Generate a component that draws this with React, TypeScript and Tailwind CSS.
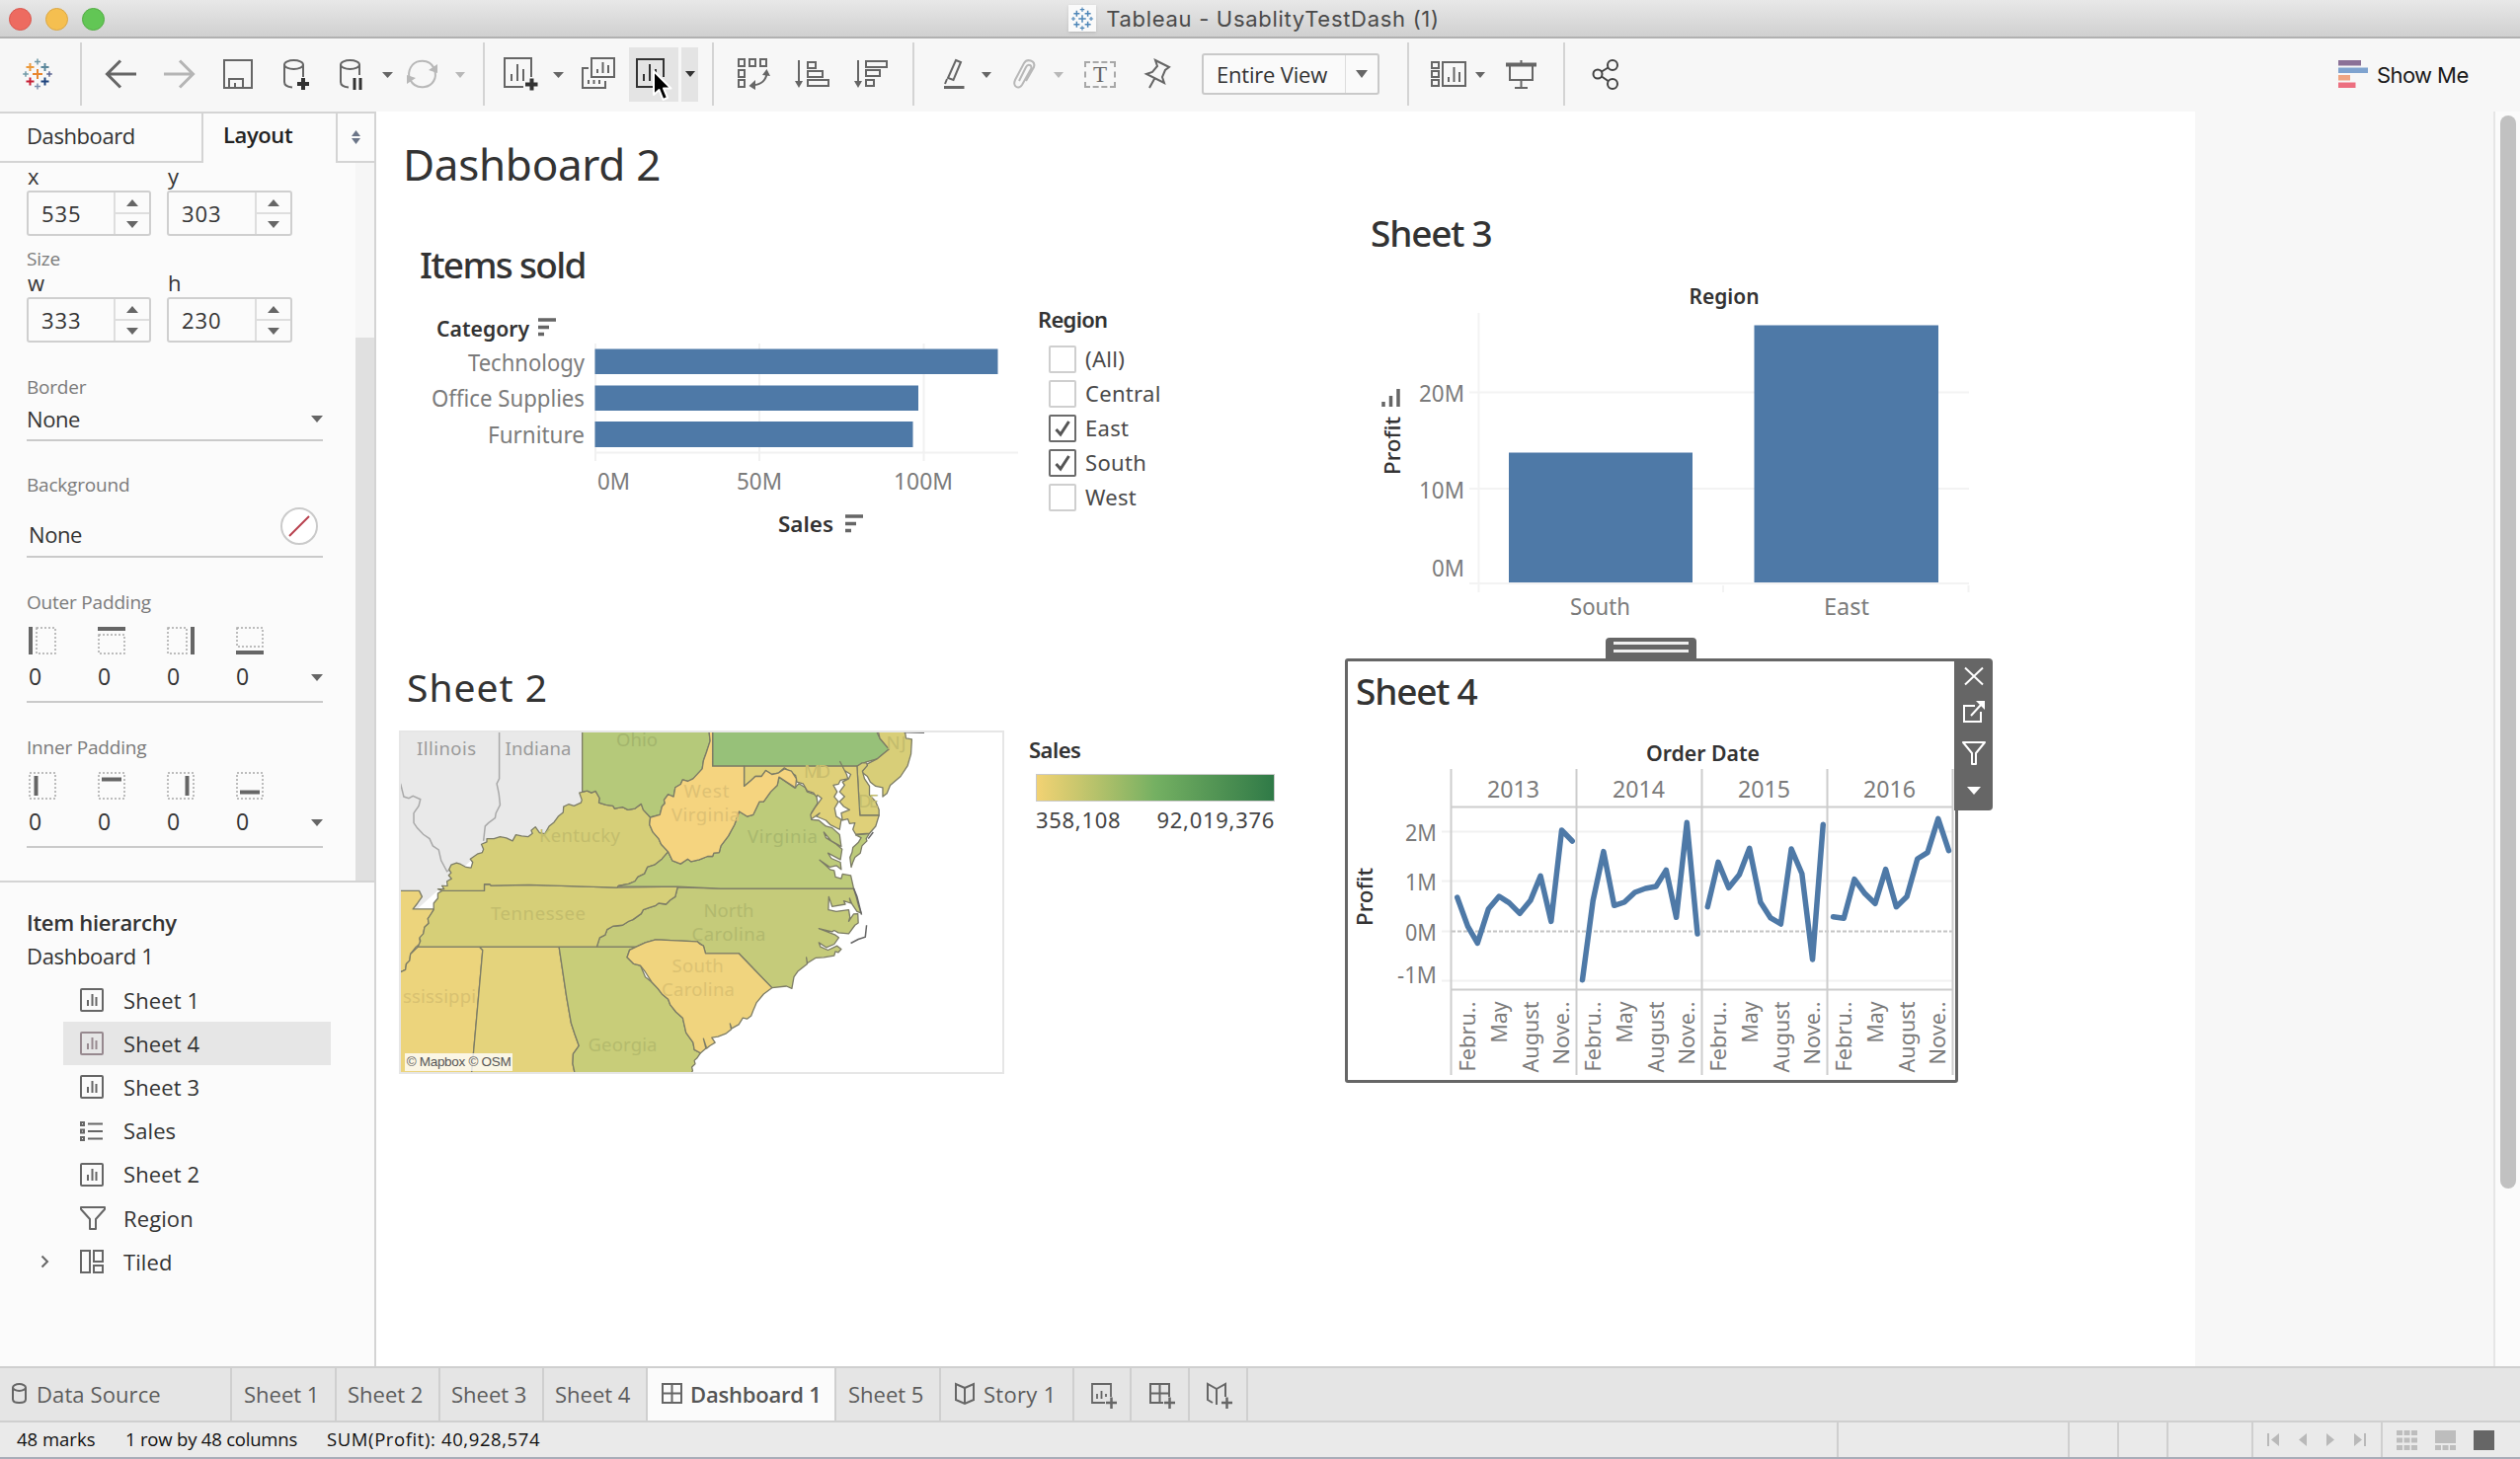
import React from "react";

const INK = "#666666";
const BLUE = "#4e79a7";

/* ---------- shared bits ---------- */

function Caret({ w = 12, h = 7, color = INK, up = false }: { w?: number; h?: number; color?: string; up?: boolean }) {
  return (
    <svg width={w} height={h} viewBox="0 0 12 7" preserveAspectRatio="none" className="block shrink-0">
      <path d={up ? "M0 7H12L6 0Z" : "M0 0H12L6 7Z"} fill={color} />
    </svg>
  );
}

function Icon({ w, h = 34, x = 0, children, color = INK, sw = 2 }: { w: number; h?: number; x?: number; children: React.ReactNode; color?: string; sw?: number }) {
  return (
    <svg width={w} height={h} viewBox={`${x} 0 ${w} ${h}`} fill="none" stroke={color} strokeWidth={sw} className="block shrink-0 overflow-visible">
      {children}
    </svg>
  );
}

const plus = (cx: number, cy: number, r: number, color: string, sw: number) => (
  <path key={`${cx}-${cy}`} d={`M${cx - r} ${cy}H${cx + r}M${cx} ${cy - r}V${cy + r}`} stroke={color} strokeWidth={sw} />
);

function Logo({ size, mono }: { size: number; mono?: boolean }) {
  const c = (v: string) => (mono ? "#4e86b8" : v);
  return (
    <svg width={size} height={size} viewBox="0 0 32 32" className="block shrink-0">
      {plus(16, 16, 5, c("#e8862d"), 2)}
      {plus(8.5, 9, 4, c("#eb9a3c"), 2)}
      {plus(23.5, 9, 4, c("#5b879b"), 2)}
      {plus(8.5, 23.5, 4, c("#c72035"), 2)}
      {plus(23.5, 23.5, 4, c("#1f447e"), 2)}
      {plus(16, 3.5, 3, c("#7199a6"), 1.5)}
      {plus(16, 28.5, 3, c("#7b8fae"), 1.5)}
      {plus(4, 16, 2.8, c("#7199a6"), 1.5)}
      {plus(28, 16, 2.8, c("#5c6692"), 1.5)}
    </svg>
  );
}

/* ---------- title bar and toolbar ---------- */

function TitleBar() {
  return (
    <div className="relative flex h-[39px] shrink-0 items-center justify-center border-b-2 border-[#b1b1b1] bg-linear-to-b from-[#e8e8e8] to-[#d0d0d0]">
      <div className="absolute left-[9px] top-[8px] flex gap-[14px]">
        <span className="size-[23px] rounded-full border border-[#d9574e] bg-[#ed6b60]" />
        <span className="size-[23px] rounded-full border border-[#dba744] bg-[#f5bf50]" />
        <span className="size-[23px] rounded-full border border-[#52ad43] bg-[#62c655]" />
      </div>
      <div className="mr-[12px] flex items-center gap-[10px]">
        <div className="flex h-[27px] w-[28px] items-center justify-center bg-[#fafafa] shadow-sm">
          <Logo size={24} mono />
        </div>
        <span className="font-[Inter] text-[22px] leading-none tracking-[0.7px] text-[#4a4a4a]">Tableau - UsablityTestDash (1)</span>
      </div>
    </div>
  );
}

const Sep = ({ className }: { className: string }) => <div className={`h-[64px] w-[2px] shrink-0 bg-[#d4d4d4] ${className}`} />;

function Toolbar() {
  return (
    <div className="flex h-[74px] shrink-0 items-center bg-[#f7f7f7] pb-[2px]">
      <div className="ml-[22px]"><Logo size={32} /></div>
      <Sep className="ml-[27px]" />
      <div className="ml-[24px]">
        <Icon w={31} h={30} sw={3}><path d="M1.5 15H31M15 1.5L1.5 15L15 28.5" /></Icon>
      </div>
      <div className="ml-[28px]">
        <Icon w={31} h={30} sw={3} color="#b5b5b5"><path d="M29.5 15H0M16 1.5L29.5 15L16 28.5" /></Icon>
      </div>
      <div className="ml-[29px]">
        <Icon w={30} h={30}><path d="M1 1H29V29H1ZM6 29V20H20V29M12 29V24" /></Icon>
      </div>
      <div className="ml-[31px]">
        <Icon w={27} h={30}>
          <ellipse cx="10.5" cy="5.5" rx="9.5" ry="4.5" />
          <path d="M1 5.5V23C1 26 4 28 9 28.5M20 5.5V18" />
          <path d="M14 25H26M20 19V31" stroke="#333" strokeWidth="4" />
        </Icon>
      </div>
      <div className="ml-[30px]">
        <Icon w={23} h={30}>
          <ellipse cx="10.5" cy="5.5" rx="9.5" ry="4.5" />
          <path d="M1 5.5V23C1 26 4 28 9 28.5M20 5.5V16" />
          <path d="M15 19V31M21 19V31" stroke="#333" strokeWidth="3" />
        </Icon>
      </div>
      <div className="ml-[20px] mt-[2px]"><Caret w={11} h={6} /></div>
      <div className="ml-[14px]">
        <Icon w={31} h={30} color="#b8b8b8">
          <path d="M3 20C0 12 5 3 13 2C20 1 25 4 27.500 9M28 11C31 19 26 27 18 28C11 29 6 26 3.500 21" />
          <path d="M31 5V14L22 11ZM0 25V16L9 19Z" fill="#b8b8b8" stroke="none" />
        </Icon>
      </div>
      <div className="ml-[18px] mt-[2px]"><Caret w={10} h={6} color="#b8b8b8" /></div>
      <Sep className="ml-[18px]" />
      <div className="ml-[19px]">
        <Icon w={34} h={34}>
          <path d="M20 30H1V1H28V20" />
          <path d="M8 24V17M14 24V7M20 24V12" />
          <path d="M22 27.5H34.5M28.5 21.5V33.5" stroke="#333" strokeWidth="4" />
        </Icon>
      </div>
      <div className="ml-[16px] mt-[2px]"><Caret w={11} h={6} /></div>
      <div className="ml-[18px]">
        <Icon w={34} h={34}>
          <path d="M10 1H33V20H10ZM7 11H1V31H24V24" />
          <path d="M16 16V12M21.500 16V5M27 16V8M7 27V23M12.500 27V23M18 27V23" />
        </Icon>
      </div>
      <div className="ml-[14px] flex h-[55px] w-[50px] shrink-0 items-center bg-[#e4e4e4] pl-[7px]">
        <Icon w={34} h={34} color="#333">
          <path d="M20 30H1V2H28V20" />
          <path d="M8 24V17M14 24V7M20 24V12" />
        </Icon>
      </div>
      <div className="ml-[3px] flex h-[55px] w-[17px] shrink-0 items-center justify-center bg-[#e4e4e4]"><Caret w={10} h={6} color="#333" /></div>
      <Sep className="ml-[14px]" />
      <div className="ml-[24px]">
        <Icon w={33} h={32}>
          <path d="M1 1H7V8H1ZM12 1H18V8H12ZM23 1H29V8H23ZM1 12H7V19H1ZM1 22H7V29H1Z" />
          <path d="M16 27C24 27 29 22 29.500 15" />
          <path d="M33 18L29.500 11L25 17ZM18 22V32L11.500 28Z" fill={INK} stroke="none" />
        </Icon>
      </div>
      <div className="ml-[25px]">
        <Icon w={34} h={28}>
          <path d="M4 0V23M13 2H21V8H13ZM13 11H28V17H13ZM13 20H34V26H13Z" />
          <path d="M0 21H8L4 28Z" fill={INK} stroke="none" />
        </Icon>
      </div>
      <div className="ml-[26px]">
        <Icon w={34} h={28}>
          <path d="M4 0V23M12 1H33V7H12ZM12 10H26V16H12ZM12 20H20V26H12Z" />
          <path d="M0 21H8L4 28Z" fill={INK} stroke="none" />
        </Icon>
      </div>
      <Sep className="ml-[25px]" />
      <div className="ml-[30px]">
        <Icon w={22} h={32}>
          <path d="M12 2L17 4L9.500 22L4 20ZM3 21L1 26" />
          <path d="M0 29.500H20.500" strokeWidth="3" />
        </Icon>
      </div>
      <div className="ml-[16px] mt-[2px]"><Caret w={10} h={6} /></div>
      <div className="ml-[22px]">
        <Icon w={23} h={30} color="#b8b8b8">
          <path d="M6 22L13 8C15 4 20 6 18 10L9 26C6 31 -1 28 2 21L11 4C14 -1 23 1 21 8L13 22" />
        </Icon>
      </div>
      <div className="ml-[18px] mt-[2px]"><Caret w={10} h={6} color="#b8b8b8" /></div>
      <div className="ml-[21px]">
        <div className="flex h-[27px] w-[32px] shrink-0 items-center justify-center border-2 border-dashed border-[#a8a8a8] font-['Liberation_Serif'] text-[23px] leading-none text-[#666]">T</div>
      </div>
      <div className="ml-[30px]">
        <Icon w={25} h={30}>
          <path d="M10 1L24 8L20 11L17 18L19 24L1 15L7 13L12 7ZM9 20L4 29" />
        </Icon>
      </div>
      <div className="ml-[32px] flex h-[42px] w-[180px] shrink-0 rounded-[3px] border-2 border-[#c9c9c9] bg-[#fafafa]">
        <div className="flex flex-1 items-center pl-[13px] pb-px text-[22px] leading-none tracking-[-0.2px] text-[#333]">Entire View</div>
        <div className="flex w-[33px] items-center justify-center border-l border-[#dcdcdc]"><Caret w={12} h={8} /></div>
      </div>
      <Sep className="ml-[28px]" />
      <div className="ml-[22px]">
        <Icon w={36} h={28}>
          <path d="M1 2H8V8H1ZM1 11H8V17H1ZM1 20H8V26H1ZM12 2H35V26H12Z" />
          <path d="M18 22V17M23.500 22V7M29 22V12" />
        </Icon>
      </div>
      <div className="ml-[9px] mt-[2px]"><Caret w={10} h={6} /></div>
      <div className="ml-[21px]">
        <Icon w={31} h={29}>
          <path d="M15.500 0V4M4 5V20H27V5M15.500 20V27M9 28H22" />
          <path d="M0 4.500H31" strokeWidth="4" />
        </Icon>
      </div>
      <Sep className="ml-[27px]" />
      <div className="ml-[27px]">
        <Icon w={28} h={30} color="#444">
          <circle cx="6" cy="15" r="4.500" /><circle cx="21" cy="6" r="5" /><circle cx="21" cy="25" r="5" />
          <path d="M10 12.500L16.500 8.500M10 17.500L16.500 22" />
        </Icon>
      </div>
      <div className="ml-auto mr-[54px] flex items-center gap-[9px]">
        <svg width="30" height="28" className="block shrink-0">
          <path d="M0 0H23V5.500H0Z" fill="#8b7197" /><path d="M0 7.500H30V13H0Z" fill="#7fa3cf" />
          <path d="M0 15H12V20.500H0Z" fill="#f0a582" /><path d="M0 22.500H17.500V28H0Z" fill="#ec6f80" />
        </svg>
        <span className="w-[91px] pt-px font-[Inter] text-[22px] leading-none tracking-[-0.6px] whitespace-nowrap text-[#1a1a1a]">Show Me</span>
      </div>
    </div>
  );
}

/* ---------- side panel ---------- */

function NumberField({ value, wide }: { value: string; wide?: boolean }) {
  return (
    <div className={`flex h-[46px] rounded-[3px] border-2 border-[#cfcfcf] ${wide ? "w-[127px]" : "w-[126px]"}`}>
      <div className="flex flex-1 items-center pl-[13px] text-[22px] tracking-[0.9px]">{value}</div>
      <div className="flex w-[36px] flex-col border-l-2 border-[#dedede]">
        <div className="flex flex-1 items-center justify-center border-b-2 border-[#dedede]"><Caret up /></div>
        <div className="flex flex-1 items-center justify-center"><Caret /></div>
      </div>
    </div>
  );
}

function FieldPair({ labels, values }: { labels: [string, string]; values: [string, string] }) {
  return (
    <div className="flex gap-[16px]">
      {labels.map((label, i) => (
        <div key={label} className="flex flex-col">
          <div className="h-[28px] pl-px text-[22px] leading-[27px]">{label}</div>
          <NumberField value={values[i]} wide={i === 1} />
        </div>
      ))}
    </div>
  );
}

const GroupLabel = ({ children }: { children: React.ReactNode }) => (
  <div className="h-6 text-[19px] leading-6 tracking-[-0.2px] text-[#7a7a7a]">{children}</div>
);

const outerPad = [
  { bar: "M2 0V28", box: "M8 1H27V27H8Z" },
  { bar: "M0 2H28", box: "M1 8H27V27H1Z" },
  { bar: "M26 0V28", box: "M1 1H20V27H1Z" },
  { bar: "M0 26H28", box: "M1 1H27V20H1Z" },
];
const innerPad = [
  { bar: "M7.500 4V24", box: "M1 1H27V27H1Z" },
  { bar: "M4 7.500H24", box: "M1 1H27V27H1Z" },
  { bar: "M20.500 4V24", box: "M1 1H27V27H1Z" },
  { bar: "M4 20.500H24", box: "M1 1H27V27H1Z" },
];

function Padding({ label, icons }: { label: string; icons: { bar: string; box: string }[] }) {
  return (
    <div className="mt-[33px]">
      <GroupLabel>{label}</GroupLabel>
      <div className="mt-[13px] flex h-[77px] border-b-2 border-[#cacaca] pl-[2px]">
        {icons.map((p, i) => (
          <div key={i} className="w-[70px]">
            <svg width="28" height="28" fill="none" className="block">
              <path d={p.box} stroke="#a8a8a8" strokeWidth="1.500" strokeDasharray="2 2" />
              <path d={p.bar} stroke={INK} strokeWidth="4" />
            </svg>
            <div className="text-[23px] leading-[45px]">0</div>
          </div>
        ))}
        <div className="ml-auto pt-[48px]"><Caret /></div>
      </div>
    </div>
  );
}

const SheetGlyph = ({ color = INK }: { color?: string }) => (
  <Icon w={24} h={24} color={color}><rect x="1" y="1" width="22" height="22" rx="1" /><path d="M8 18V12M12.500 18V6M16.500 18V9" /></Icon>
);

const hierarchy = [
  { name: "Sheet 1", icon: <SheetGlyph /> },
  { name: "Sheet 4", icon: <SheetGlyph color="#97898f" />, active: true },
  { name: "Sheet 3", icon: <SheetGlyph /> },
  { name: "Sales", icon: <Icon w={24} h={22}><path d="M1 2H4V5H1ZM1 9.500H4V12.500H1ZM1 17H4V20H1ZM8 3.500H23M8 11H23M8 18.500H23" /></Icon> },
  { name: "Sheet 2", icon: <SheetGlyph /> },
  { name: "Region", icon: <Icon w={26} h={24}><path d="M1 1H25V3L16 13V23H10V13L1 3Z" strokeLinejoin="round" /></Icon> },
  { name: "Tiled", icon: <Icon w={24} h={24}><path d="M1 1H10V23H1ZM14 1H23V12H14ZM14 16H23V23H14Z" /></Icon>, open: true },
];

function SidePanel() {
  return (
    <aside className="flex w-[381px] shrink-0 flex-col border-r-2 border-[#d4d4d4] bg-[#fbfbfb] text-[#333]">
      <div className="flex h-[52px] shrink-0 border-t-2 border-[#d4d4d4] text-[22px]">
        <div className="flex w-[206px] items-center border-b-2 border-r-2 border-[#d4d4d4] pb-[4px] pl-[27px] tracking-[-0.4px]">Dashboard</div>
        <div className="flex flex-1 items-center pb-[7px] pl-[20px] font-semibold tracking-[-0.4px] text-[#222]">Layout</div>
        <div className="flex w-[39px] flex-col items-center justify-center gap-[2px] border-b-2 border-l-2 border-[#d4d4d4]">
          <Caret w={9} h={6} color="#6b7588" up /><Caret w={9} h={6} color="#6b7588" />
        </div>
      </div>
      <div className="flex h-[729px] shrink-0 border-b-2 border-[#d4d4d4]">
        <div className="ml-[27px] w-[300px]">
          <FieldPair labels={["x", "y"]} values={["535", "303"]} />
          <div className="mt-[11px] h-[23px]"><GroupLabel>Size</GroupLabel></div>
          <FieldPair labels={["w", "h"]} values={["333", "230"]} />
          <div className="mt-[33px]"><GroupLabel>Border</GroupLabel></div>
          <div className="flex h-[43px] items-center justify-between border-b-2 border-[#cacaca] text-[22px] tracking-[-0.4px]">
            None<Caret />
          </div>
          <div className="mt-8"><GroupLabel>Background</GroupLabel></div>
          <div className="flex h-[62px] items-center justify-between border-b-2 border-[#cacaca] pl-[2px] pr-[5px] text-[22px] tracking-[-0.4px]">
            <span className="pt-4">None</span>
            <svg width="38" height="38" fill="none" className="block">
              <circle cx="19" cy="19" r="18" fill="#fff" stroke="#cacaca" strokeWidth="2" />
              <path d="M9 29L29 9" stroke="#b8404e" strokeWidth="2" />
            </svg>
          </div>
          <Padding label="Outer Padding" icons={outerPad} />
          <Padding label="Inner Padding" icons={innerPad} />
        </div>
        <div className="ml-auto w-[19px] bg-[#f6f6f6] pt-[177px]"><div className="h-full bg-[#e0e0e0]" /></div>
      </div>
      <div className="mt-[23px] h-[34px] pl-[27px] text-[22px] font-semibold leading-[34px] tracking-[-0.3px]">Item hierarchy</div>
      <div className="h-[34px] pl-[27px] text-[22px] leading-[34px] tracking-[-0.3px]">Dashboard 1</div>
      <ul className="mt-[6px]">
        {hierarchy.map((h) => (
          <li key={h.name} className="flex h-[44.200px] pl-[41px] pr-[44px]">
            <span className="flex w-[23px] items-center">
              {h.open && <Icon w={8} h={12}><path d="M1.500 0.500L7 6L1.500 11.500" /></Icon>}
            </span>
            <span className={`flex flex-1 items-center ${h.active ? "bg-[#e6e6e6]" : ""}`}>
              <span className="flex w-[61px] pl-[17px]">{h.icon}</span>
              <span className="text-[22px] tracking-[0.1px]">{h.name}</span>
            </span>
          </li>
        ))}
      </ul>
    </aside>
  );
}

/* ---------- dashboard ---------- */

const SortDesc = ({ x, y }: { x: number; y: number }) => (
  <path d={`M${x} ${y + 2}h18M${x} ${y + 9.500}h11M${x} ${y + 16.500}h6`} stroke={INK} strokeWidth="3.500" />
);

function Tx({ x, y, w, s = 23, a = "start", fill = "#7b7b7b", weight = 400, children }: { x: number; y: number; w?: number; s?: number; a?: "start" | "middle" | "end"; fill?: string; weight?: number; children: string }) {
  return (
    <text x={x} y={y} fontSize={s} textAnchor={a} fill={fill} fontWeight={weight} textLength={w} lengthAdjust="spacingAndGlyphs">
      {children}
    </text>
  );
}

function ItemsSold() {
  return (
    <svg width="650" height="248" viewBox="381 309 650 248" className="block shrink-0">
      <path d="M603 348V467M769 348V467M935.500 348V467M602 458.500H1031" stroke="#f1f1f1" strokeWidth="2" />
      <Tx x={442} y={340.500} w={94} s={22} weight={600} fill="#333">Category</Tx>
      <SortDesc x={545} y={322} />
      <Tx x={592} y={376} w={118} a="end">Technology</Tx>
      <Tx x={592} y={412} w={155} a="end">Office Supplies</Tx>
      <Tx x={592} y={449} w={98} a="end">Furniture</Tx>
      <path d="M602.500 353.500H1010.500V379H602.500ZM602.500 390.500H930V416H602.500ZM602.500 427H924.500V453H602.500Z" fill={BLUE} />
      <Tx x={605} y={495.500} w={33}>0M</Tx>
      <Tx x={746} y={495.500} w={46}>50M</Tx>
      <Tx x={905} y={495.500} w={60}>100M</Tx>
      <Tx x={788} y={539} w={56} s={22} weight={600} fill="#333">Sales</Tx>
      <SortDesc x={856} y={521} />
    </svg>
  );
}

function RegionFilter() {
  const rows: [string, boolean][] = [["(All)", false], ["Central", false], ["East", true], ["South", true], ["West", false]];
  return (
    <div className="ml-[20px] text-[#4a4a4a]">
      <div className="h-[27px] text-[22px] font-semibold leading-[28px] tracking-[-0.7px] text-[#333]">Region</div>
      <div className="mt-[10px] pl-[11px]">
        {rows.map(([name, on]) => (
          <div key={name} className="flex h-[35px] items-center gap-[9px] text-[22px] tracking-[0.3px]">
            <span className={`flex size-[28px] items-center justify-center rounded-[2px] border-2 bg-white ${on ? "border-[#6b6b6b]" : "border-[#cfcfcf]"}`}>
              {on && <svg width="18" height="18" fill="none"><path d="M2.500 10L7 15L15.500 2" stroke="#555" strokeWidth="3" /></svg>}
            </span>
            {name}
          </div>
        ))}
      </div>
    </div>
  );
}

const states: [string, string][] = [
  ["#ecd47c", "M55 727H105L112 745 101 765 90 783H140L134 800 126 812 128 826 118 838 115 860 106 873 108 888 96 900 84 920 82 940 74 950 72 968 60 975 55 975Z"],
  ["#ecd47c", "M102 898H250L258 908 231 1290H55V975L60 975 72 968 74 950 82 940 84 920 96 905Z"],
  ["#e4d37c", "M250 898H442L460 1050 471 1130 480 1165 490 1200 476 1225 475 1255 481 1290H231L258 908Z"],
  ["#c8cd79", "M442 898H630L612 907 606 930 622 950 638 955 650 990 665 1005 680 1025 690 1042 705 1058 710 1075 724 1097 740 1115 748 1160 765 1190 768 1212 783 1222 774 1238 768 1245 770 1255 762 1265 764 1276 758 1290H481L475 1255 476 1225 490 1200 480 1165 471 1130 460 1050Z"],
  ["#c5cb7a", "M728 716L830 720H1152L1158 745 1163 770 1170 795 1160 790 1148 768 1142 750 1145 765 1128 758 1132 768 1100 775 1092 745 1091 785 1110 790 1140 785 1143 808 1140 820 1152 798 1162 797 1163 825 1155 832 1140 858 1115 855 1105 848 1100 852 1068 842 1108 862 1116 870 1105 890 1086 900 1068 885 1072 898 1090 908 1112 895 1122 905 1115 915 1108 912 1105 925 1080 930 1060 932 1040 948 1038 930 1040 950 1018 972 1008 990 1003 1025 990 1018 955 1023 875 918H795L790 895 775 882 675 876 650 885 628 898H533L540 870 553 862 558 845 572 835 595 832 610 820 620 815 640 797 645 785 660 778 675 772 682 765 700 768 710 755 722 745Z"],
  ["#d6cf78", "M160 727H262V707H275L278 711 370 709 582 717 728 714 722 745 710 755 700 768 682 765 675 772 660 778 645 785 640 797 620 815 610 820 595 832 572 835 558 845 553 862 540 870 533 898H102L108 880 106 870 115 858 118 838 128 826 126 812 140 785 140 765 150 750 150 735Z"],
  ["#f0d47e", "M606 930L612 908 628 898 650 885 675 876 775 882 782 890 790 895 795 918H875L955 1023 935 1042 918 1068 910 1092 905 1108 895 1118 885 1115 875 1135 858 1147 854 1132 857 1150 845 1162 825 1172 810 1175 818 1190 805 1200 798 1208 790 1178 796 1208 783 1222 768 1212 765 1190 748 1160 740 1115 724 1097 710 1075 705 1058 690 1042 680 1025 665 1005 650 975 638 955 622 950Z"],
  ["#d6cf78", "M160 727L150 722 165 722 160 712 173 712 172 698 183 690 176 680 182 672 177 662 182 648 195 642 205 646 218 655 230 657 234 640 228 630 245 615 257 610 260 600 255 585 268 578 268 568 285 568 300 562 315 566 330 575 338 556 352 560 368 562 378 552 375 543 385 532 395 550 408 553 418 530 430 518 440 500 452 488 453 470 465 463 478 468 495 458 497 450 491 428 510 422 520 428 530 423 540 445 538 458 555 465 572 468 576 476 595 472 608 480 625 476 640 462 645 480 662 503 660 525 668 548 682 568 688 585 705 608 690 630 672 648 655 655 648 675 632 685 625 698 610 706 585 712 582 717 370 709 278 711 275 707H262V727Z"],
  ["#bdcb7a", "M972 380L1010 413 1020 400 1035 412 1040 425 1062 435 1065 460 1050 490 1050 510 1068 512 1085 530 1100 535 1118 556 1122 592 1098 575 1080 548 1085 565 1110 585 1124 600 1120 632 1090 612 1098 628 1120 640 1122 662 1110 650 1095 655 1070 633 1085 650 1095 662 1105 665 1108 685 1122 690 1125 676 1145 680 1152 720H830L728 714H585V712L610 706 625 698 632 685 648 675 655 655 672 648 690 630 705 608 715 635 735 645 752 630 760 638 780 632 800 622 812 622 815 612 828 610 832 590 850 560 865 525 876 485 895 500 910 495 925 455 935 455 952 425 968 405Z"],
  ["#bdcb7a", "M1157 557L1190 552 1182 568 1184 575 1172 590 1168 612 1155 625 1150 640 1146 655 1143 625 1148 610 1150 595 1163 580 1170 565Z"],
  ["#b5c97a", "M498 235H803L806 270 797 305 790 330 787 355 765 385 752 393 740 388 735 402 722 412 718 440 705 433 695 450 697 460 690 470 685 495 662 503 645 480 640 462 625 476 608 480 595 472 576 476 572 468 555 465 538 458 540 445 530 423 520 428 510 422 498 425Z"],
  ["#97c179", "M812 235H1205L1215 262 1237 295 1208 325 1180 335 1160 347H812Z"],
  ["#d8ce78", "M1210 235H1275L1278 262 1292 265 1290 310 1282 345 1265 378 1240 405 1232 430 1222 440 1222 412 1205 408 1192 395 1185 378 1172 365 1185 340 1208 325 1237 295 1215 262Z"],
  ["#d8ce78", "M1160 347L1172 337 1183 337 1185 345 1173 362 1178 385 1190 408 1190 435 1205 455 1213 480V497H1167Z"],
  ["#dfd079", "M888 347H1160L1167 497H1213L1205 530 1190 552 1157 555 1150 540 1155 520 1142 522 1138 508 1125 512 1122 490 1142 480 1128 470 1118 455 1130 440 1118 425 1130 405 1125 395 1140 385 1145 372 1130 360 1119 333 1135 372 1138 385 1120 390 1115 402 1103 405 1112 425 1105 440 1115 455 1106 475 1110 500 1122 510 1118 540 1095 525 1085 512 1062 500 1070 490 1050 508 1048 495 1058 475 1075 445 1065 435 1062 440 1055 428 1040 422 1030 400 1015 395 1012 375 985 352 970 368 955 372 940 360 930 378 915 378 905 390 888 408Z"],
  ["#f5d47f", "M803 235H812V347H888V408L905 390 915 378 930 378 940 360 955 372 970 368 985 355 1002 362 1014 385 1012 413 990 395 972 380 968 405 952 425 935 455 925 455 910 495 895 500 876 485 865 525 850 560 832 590 828 610 815 612 812 622 800 622 780 632 760 638 752 630 735 645 715 635 705 608 688 585 682 568 668 548 660 525 662 503 685 495 690 470 697 460 695 450 705 433 718 440 722 412 735 402 740 388 752 393 765 385 787 355 790 330 797 305 806 270Z"],
];

const mapLabels: [string, number, number, number, string][] = [
  ["Illinois", 452, 765, 60, "#9a9a9a"],
  ["Indiana", 545, 765, 67, "#9a9a9a"],
  ["Ohio", 645, 755.500, 42, "#a3b56d"],
  ["Kentucky", 587, 853, 82, "#c3bd6d"],
  ["West", 715.500, 808, 46, "#dec174"],
  ["Virginia", 714.600, 832, 69, "#dec174"],
  ["Virginia", 792.500, 854, 71, "#a9b86e"],
  ["Tennessee", 545, 932, 96, "#c3bd6d"],
  ["North", 738, 929, 51, "#b2b96e"],
  ["Carolina", 738, 953, 75, "#b2b96e"],
  ["South", 706.600, 985, 52, "#dcc272"],
  ["Carolina", 707, 1009, 74, "#dcc272"],
  ["ssissippi", 445, 1016, 74, "#d8c171"],
  ["Georgia", 630.500, 1065, 70, "#b5bb6d"],
  ["MD", 827.500, 788, 27, "#c8bc6d"],
  ["NJ", 907.500, 758.500, 20, "#c3bc6d"],
  ["DE", 879.500, 818, 21, "#c3bc6d"],
];

function SalesMap() {
  return (
    <div className="relative ml-[23px] h-[348px] w-[613px] shrink-0 overflow-hidden border-2 border-[#e6e6e6]">
      <svg width="609" height="344" viewBox="61 244 1449 1036" preserveAspectRatio="none" className="block">
        <path d="M55 235H498V600H260L100 783H55Z" fill="#e9e9e9" />
        <g fill="none" stroke="#a9a9a9" strokeWidth="1.500">
          <path vectorEffect="non-scaling-stroke" d="M298 235V385L292 400 297 430 300 465 290 490 288 505 272 520 264 530 260 575" />
          <path vectorEffect="non-scaling-stroke" d="M60 400L68 440 80 445 90 438 108 448 104 468 92 490 92 520 100 535 115 555 130 568 138 590 152 602 158 635 172 668 182 660" />
        </g>
        {states.map(([fill, d], i) => (
          <path key={i} d={d} fill={fill} stroke="#7c7c66" strokeWidth="1.300" strokeLinejoin="round" vectorEffect="non-scaling-stroke" />
        ))}
        <path d="M1152 720L1160 745 1168 785 1171 800M1183 832L1180 868 1163 875 1145 887M1199 548L1187 568M1273 243L1322 245" fill="none" stroke="#666" strokeWidth="1.500" vectorEffect="non-scaling-stroke" />
      </svg>
      <svg width="609" height="344" viewBox="406 742 609 344" className="absolute inset-0 font-['Noto_Sans']">
        {mapLabels.map(([t, x, y, w, c], i) => (
          <text key={i} x={x} y={y} fontSize="18.500" textAnchor="middle" textLength={w} fill={c}>{t}</text>
        ))}
      </svg>
      <div className="absolute bottom-[1px] left-[4px] flex h-[18px] w-[109px] items-center justify-center bg-white/80 font-['Liberation_Sans'] text-[13.500px] leading-none tracking-[-0.3px] whitespace-nowrap text-[#555]">© Mapbox © OSM</div>
    </div>
  );
}

function SalesLegend() {
  return (
    <div className="ml-[25px] text-[#444]">
      <div className="mt-[3px] h-[33px] text-[22px] font-semibold leading-[32px] tracking-[-0.5px] text-[#333]">Sales</div>
      <div className="ml-[7px] mt-[8px] h-[28px] w-[242px] border border-[#c9c9c9] bg-linear-to-r from-[#f2d273] via-[#74b062] to-[#2f7a47]" />
      <div className="ml-[7px] flex h-[37px] w-[242px] items-center justify-between text-[22px] tracking-[0.7px]">
        <span>358,108</span><span>92,019,376</span>
      </div>
    </div>
  );
}

function ProfitByRegion() {
  return (
    <svg width="660" height="373" viewBox="1362 273 660 373" className="block">
      <Tx x={1710.500} y={307.500} w={71} s={22} weight={600} fill="#333">Region</Tx>
      <path d="M1488 397.500H1994M1488 495H1994M1488 591H1994M1497.500 317V600M1745 593V600M1993.500 593V600" stroke="#f3f3f3" strokeWidth="2" />
      <path d="M1528 458.500H1714V590H1528ZM1776.500 329.500H1963V590H1776.500Z" fill={BLUE} />
      <Tx x={1483} y={407} w={46} a="end">20M</Tx>
      <Tx x={1483} y={504.500} w={46} a="end">10M</Tx>
      <Tx x={1483} y={583.500} w={33} a="end">0M</Tx>
      <Tx x={1620.500} y={622.500} w={61} a="middle">South</Tx>
      <Tx x={1870} y={622.500} w={46} a="middle">East</Tx>
      <g transform="translate(1418 481) rotate(-90)"><Tx x={0} y={0} w={59} s={22} weight={500} fill="#333">Profit</Tx></g>
      <path d="M1401 412V407M1408.500 412V401M1416 412V394" stroke={INK} strokeWidth="3.500" />
    </svg>
  );
}

const series = [
  "304 807 328 895 350 946 375 842 399 804 422 824 446 856 470 817 493 742 517 880 541 603 565 636",
  "588 1058 612 817 636 668 660 832 683 822 707 792 731 780 755 774 778 724 801 868 825 580 849 918",
  "872 836 896 700 920 778 944 738 967 658 992 822 1015 870 1038 888 1062 660 1086 735 1110 996 1134 586",
  "1157 866 1181 871 1205 752 1229 796 1252 826 1276 722 1300 836 1324 805 1348 690 1371 671 1395 568 1419 665",
];
const months: [string, number, number][] = [["Febru..", 1494, 71], ["May", 1525.500, 42], ["August", 1557.500, 72], ["Nove..", 1589, 64]];

function ProfitByDate() {
  const cols = [0, 127, 254, 381];
  return (
    <svg width="614" height="363" viewBox="1365 730 614 363" className="block">
      <Tx x={1667} y={770.500} w={115} s={22} weight={600} fill="#333">Order Date</Tx>
      <path d="M1460 842.500H1977M1460 892.500H1977M1460 943.500H1470M1460 993.500H1977" stroke="#f1f1f1" strokeWidth="2" />
      <path d="M1470 943.500H1977" stroke="#c4c4c4" strokeWidth="2" strokeDasharray="4 2" />
      <path d="M1469.500 779V1089M1596.500 779V1089M1723.500 779V1089M1850.500 779V1089M1977.500 779V1089M1469 817.500H1978M1469 1002.500H1978" stroke="#cdcdcd" strokeWidth="2" />
      {cols.map((dx, i) => (
        <g key={dx}>
          <Tx x={1532.500 + dx} y={808} w={53} a="middle">{String(2013 + i)}</Tx>
          {months.map(([m, x, w]) => (
            <g key={m} transform={`translate(${x + dx} 1014.500) rotate(-90)`}><Tx x={0} y={0} w={w} a="end" s={22}>{m}</Tx></g>
          ))}
        </g>
      ))}
      <Tx x={1455} y={852} w={32} a="end">2M</Tx>
      <Tx x={1455} y={902} w={32} a="end">1M</Tx>
      <Tx x={1455} y={953} w={32} a="end">0M</Tx>
      <Tx x={1455} y={996} w={40} a="end">-1M</Tx>
      <g transform="translate(1390 938) rotate(-90)"><Tx x={0} y={0} w={59} s={22} weight={500} fill="#333">Profit</Tx></g>
      <g transform="translate(1340 640) scale(0.44643 0.33333)">
        {series.map((p) => (
          <polyline key={p} points={p} fill="none" stroke={BLUE} strokeWidth="5.500" strokeLinejoin="round" strokeLinecap="round" vectorEffect="non-scaling-stroke" />
        ))}
      </g>
    </svg>
  );
}

function SelectedSheet() {
  return (
    <div className="w-[658px]">
      <div className="ml-[264px] flex h-[21px] w-[92px] flex-col gap-[5px] rounded-t-[4px] bg-[#666] px-[8px] pt-[4px]">
        <span className="h-[3px] bg-white/90" /><span className="h-[3px] bg-white/90" />
      </div>
      <div className="flex items-start">
        <div className="h-[430px] w-[621px] shrink-0 rounded-[3px] border-[3px] border-[#666] bg-white">
          <div className="h-[60px] pl-[8px] text-[37px] font-medium leading-[60px] tracking-[-1.200px]">Sheet 4</div>
          <ProfitByDate />
        </div>
        <div className="-ml-[4px] flex h-[154px] w-[39px] flex-col items-center rounded-r-[4px] bg-[#666] pt-[9px]">
          <Icon w={20} h={18} color="#fff"><path d="M1 0.500L19 17.500M19 0.500L1 17.500" /></Icon>
          <div className="mt-[16px]">
            <Icon w={22} h={22} color="#fff">
              <path d="M12 5H1V21H18V11M8 15L18 4" />
              <path d="M13 0H22V9Z" fill="#fff" stroke="none" />
            </Icon>
          </div>
          <div className="mt-[19px]">
            <Icon w={24} h={24} color="#fff"><path d="M1 1H23L14 12V23H10V12Z" strokeLinejoin="round" /></Icon>
          </div>
          <div className="mt-[22px]"><Caret w={14} h={8} color="#fff" /></div>
        </div>
      </div>
    </div>
  );
}

function DashboardCanvas() {
  return (
    <main className="flex min-w-0 flex-1 bg-[#f7f7f7] font-['Noto_Sans',sans-serif] text-[#333]">
      <div className="flex w-[1842px] shrink-0 bg-white">
        <section className="w-[981px] shrink-0">
          <h1 className="h-[104px] pl-[27px] text-[44px] leading-[106px] tracking-[-0.3px]">Dashboard 2</h1>
          <h2 className="h-[92px] pl-[44px] pt-[8px] text-[37px] font-medium leading-[85px] tracking-[-1.700px]">Items sold</h2>
          <div className="flex"><ItemsSold /><RegionFilter /></div>
          <h2 className="h-[183px] pl-[31px] pt-[94px] text-[39px] leading-[90px] tracking-[1px]">Sheet 2</h2>
          <div className="flex"><SalesMap /><SalesLegend /></div>
        </section>
        <section className="w-[861px]">
          <h2 className="h-[160px] pl-[26px] pt-[86px] text-[37px] font-medium leading-[74px] tracking-[-1.200px]">Sheet 3</h2>
          <ProfitByRegion />
          <SelectedSheet />
        </section>
      </div>
      <div className="ml-auto flex w-[27px] justify-center border-l-2 border-[#e6e6e6] bg-[#fbfbfb] pt-[4px]">
        <div className="h-[1087px] w-[16px] rounded-full bg-[#c1c1c1]" />
      </div>
    </main>
  );
}

/* ---------- bottom tabs and status bar ---------- */

const BookGlyph = ({ add }: { add?: boolean }) => (
  <Icon w={add ? 27 : 20} h={22}>
    <path d={add ? "M10 22V6L1 1V17L6 20M10 6L19 1V14" : "M10 21V5L1 1V17L10 21L19 17V1L10 5"} />
    {add && <path d="M15 20H26M20.500 14.500V26" strokeWidth="2.500" />}
  </Icon>
);

function Tab({ w, pl, active, children }: { w: string; pl: string; active?: boolean; children: React.ReactNode }) {
  return (
    <div className={`flex h-full shrink-0 items-center border-r-2 border-[#cfcfcf] pb-[2px] text-[22px] leading-none ${w} ${pl} ${active ? "bg-[#fbfbfb] font-semibold text-[#555]" : "text-[#5c5c5c]"}`}>
      {children}
    </div>
  );
}

function SheetTabs() {
  return (
    <div className="flex h-[57px] shrink-0 border-y-2 border-[#cfcfcf] bg-[#e5e5e5]">
      <Tab w="w-[235px]" pl="pl-[12px]">
        <Icon w={15} h={21}><ellipse cx="7.500" cy="4.500" rx="6.500" ry="3.500" /><path d="M1 4.500V16.500C1 18.500 3.500 20 7.500 20S14 18.500 14 16.500V4.500" /></Icon>
        <span className="ml-[10px] tracking-[0.1px]">Data Source</span>
      </Tab>
      <Tab w="w-[106px]" pl="pl-[12px]">Sheet 1</Tab>
      <Tab w="w-[105px]" pl="pl-[11px]">Sheet 2</Tab>
      <Tab w="w-[105px]" pl="pl-[11px]">Sheet 3</Tab>
      <Tab w="w-[105px]" pl="pl-[11px]">Sheet 4</Tab>
      <Tab w="w-[191px]" pl="pl-[14px]" active>
        <Icon w={21} h={21}><path d="M1 1H20V20H1ZM10.500 1V20M1 10.500H20" /></Icon>
        <span className="ml-[8px] tracking-[-0.2px]">Dashboard 1</span>
      </Tab>
      <Tab w="w-[106px]" pl="pl-[12px]">Sheet 5</Tab>
      <Tab w="w-[135px]" pl="pl-[14px]"><BookGlyph /><span className="ml-[9px] tracking-[0.3px]">Story 1</span></Tab>
      <Tab w="w-[58px]" pl="pl-[17px]">
        <Icon w={27} h={22}><path d="M14 20H1V1H20V14M6 16V11M10.500 16V8M15 14V11" strokeWidth="1.800" /><path d="M15 20H26M20.500 14.500V26" strokeWidth="2.500" /></Icon>
      </Tab>
      <Tab w="w-[59px]" pl="pl-[18px]">
        <Icon w={27} h={22}><path d="M14 20H1V1H20V14M10.500 1V20M1 10.500H20" /><path d="M15 20H26M20.500 14.500V26" strokeWidth="2.500" /></Icon>
      </Tab>
      <Tab w="w-[59px]" pl="pl-[17px]"><BookGlyph add /></Tab>
    </div>
  );
}

function StatusBar() {
  return (
    <div className="flex h-[37px] shrink-0 items-center border-b-2 border-[#a9adb8] bg-[#eaeaea] text-[18.500px] leading-none text-[#111]">
      <span className="ml-[17px] w-[110px]">48 marks</span>
      <span className="w-[204px] tracking-[-0.2px]">1 row by 48 columns</span>
      <span className="tracking-[0.6px]">SUM(Profit): 40,928,574</span>
      <div className="ml-auto flex h-full">
        <div className="w-[234px] border-l-2 border-[#cfcfcf]" />
        <div className="w-[50px] border-l-2 border-[#cfcfcf]" />
        <div className="w-[50px] border-l-2 border-[#cfcfcf]" />
        <div className="w-[86px] border-l-2 border-[#cfcfcf]" />
        <div className="flex w-[131px] items-center justify-between border-l-2 border-[#cfcfcf] pl-[14px] pr-[15px]">
          <svg width="12" height="13"><path d="M0 0H2V13H0ZM12 0V13L4 6.500Z" fill="#b9b9b9" /></svg>
          <svg width="8" height="13"><path d="M8 0V13L0 6.500Z" fill="#b9b9b9" /></svg>
          <svg width="8" height="13"><path d="M0 0V13L8 6.500Z" fill="#b9b9b9" /></svg>
          <svg width="12" height="13"><path d="M12 0H10V13H12ZM0 0V13L8 6.500Z" fill="#b9b9b9" /></svg>
        </div>
        <div className="flex w-[141px] items-center gap-[18px] border-l-2 border-[#cfcfcf] pl-[14px]">
          <svg width="21" height="20" fill="none" stroke="#bdbdbd" strokeWidth="5"><path d="M0 2.500H21M0 10H21M0 17.500H21" strokeDasharray="6 1.500" /></svg>
          <svg width="21" height="20" fill="#bdbdbd"><path d="M0 0H21V13H0ZM0 15H6V20H0ZM7.500 15H13.500V20H7.500ZM15 15H21V20H15Z" /></svg>
          <div className="h-[20px] w-[21px] bg-[#666]" />
        </div>
      </div>
    </div>
  );
}

export default function App() {
  return (
    <div className="relative flex h-[1478px] w-[2552px] flex-col overflow-hidden bg-[#f7f7f7] font-['Open_Sans',sans-serif]">
      <TitleBar />
      <Toolbar />
      <div className="flex min-h-0 flex-1">
        <SidePanel />
        <DashboardCanvas />
      </div>
      <SheetTabs />
      <StatusBar />
      <svg width="24" height="34" viewBox="0 0 24 34" className="absolute left-[660px] top-[70px]">
        <path d="M2 2V26L7.500 21L11.500 31L16 29L12 19.500H19.500Z" fill="#000" stroke="#fff" strokeWidth="2" strokeLinejoin="round" />
      </svg>
    </div>
  );
}
